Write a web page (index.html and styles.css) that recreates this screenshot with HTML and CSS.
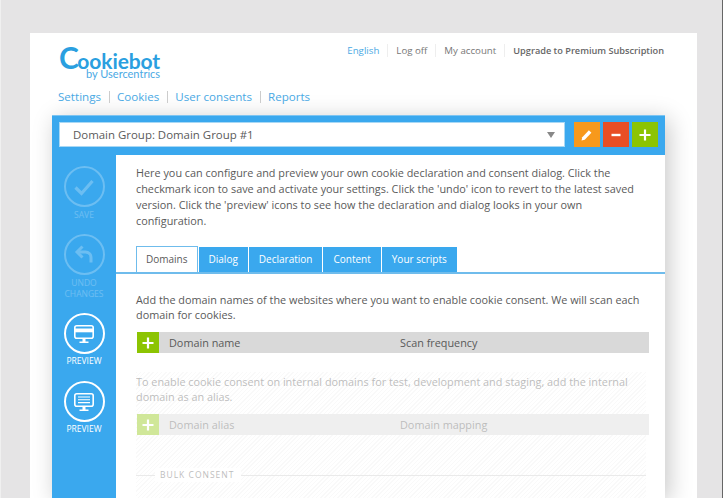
FILE: index.html
```html
<!DOCTYPE html>
<html>
<head>
    <title>Cookiebot - Settings</title>
    <link rel="stylesheet" href="styles.css">
</head>
<body>
    <div class="card">
        <div class="header">
            <div class="logo">
                <div class="logo-name"><span class="logo-c">C</span>ookiebot</div>
                <div class="logo-by">by Usercentrics</div>
            </div>
            <div class="top-nav">
                <a class="lang">English</a>
                <a>Log off</a>
                <a>My account</a>
                <a class="upgrade">Upgrade to Premium Subscription</a>
            </div>
        </div>

        <div class="main-nav">
            <a>Settings</a>
            <a>Cookies</a>
            <a>User consents</a>
            <a>Reports</a>
        </div>

        <div class="panel">
            <div class="panel-top">
                <div class="select">
                    <span>Domain Group: Domain Group #1</span>
                    <span class="caret"></span>
                </div>
                <div class="actions">
                    <div class="btn orange">
                        <svg width="14" height="14" viewBox="0 0 14 14"><path d="M1.5 12.5l.8-3.2 6.6-7 2.5 2.4-6.7 7z" fill="#fff"/></svg>
                    </div>
                    <div class="btn red">
                        <svg width="14" height="14" viewBox="0 0 14 14"><path d="M2.5 7h9" stroke="#fff" stroke-width="2.4" fill="none"/></svg>
                    </div>
                    <div class="btn green">
                        <svg width="14" height="14" viewBox="0 0 14 14"><path d="M1.5 7h11M7 1.5v11" stroke="#fff" stroke-width="2.2" fill="none"/></svg>
                    </div>
                </div>
            </div>

            <div class="panel-body">
                <div class="sidebar">
                    <div class="side-item faded">
                        <div class="circle">
                            <svg width="26" height="26" viewBox="0 0 26 26"><path d="M4.5 13.5l6 6L21.5 7" stroke="#fff" stroke-width="3.2" fill="none"/></svg>
                        </div>
                        <div class="side-label">SAVE</div>
                    </div>
                    <div class="side-item faded">
                        <div class="circle">
                            <svg width="26" height="26" viewBox="0 0 26 26"><path d="M7 10h7.5a5.5 5.5 0 0 1 5.500 5.500v5" stroke="#fff" stroke-width="3" fill="none"/><path d="M11.500 4.500L6 10l5.500 5.500" stroke="#fff" stroke-width="3" fill="none"/></svg>
                        </div>
                        <div class="side-label">UNDO CHANGES</div>
                    </div>
                    <div class="side-item preview">
                        <div class="circle">
                            <svg width="26" height="26" viewBox="0 0 26 26">
                                <rect x="3.800" y="4.800" width="18.400" height="12.400" rx="2" stroke="#fff" stroke-width="1.600" fill="none"/>
                                <rect x="4" y="7.500" width="18" height="3.800" fill="#fff"/>
                                <path d="M11.500 18h3v2.500h-3zM8.500 20.500h9V22h-9z" fill="#fff"/>
                            </svg>
                        </div>
                        <div class="side-label">PREVIEW</div>
                    </div>
                    <div class="side-item preview">
                        <div class="circle">
                            <svg width="26" height="26" viewBox="0 0 26 26">
                                <rect x="3.800" y="4.800" width="18.400" height="12.400" rx="2" stroke="#fff" stroke-width="1.600" fill="none"/>
                                <path d="M7 8h12M7 10.800h12M7 13.600h12" stroke="#fff" stroke-width="1.100" fill="none"/>
                                <path d="M11.500 18h3v2.500h-3zM8.500 20.500h9V22h-9z" fill="#fff"/>
                            </svg>
                        </div>
                        <div class="side-label">PREVIEW</div>
                    </div>
                </div>

                <div class="content">
                    <p class="intro">Here you can configure and preview your own cookie declaration and consent dialog. Click the checkmark icon to save and activate your settings. Click the 'undo' icon to revert to the latest saved version. Click the 'preview' icons to see how the declaration and dialog looks in your own configuration.</p>

                    <div class="tabs">
                        <div class="tab active">Domains</div>
                        <div class="tab">Dialog</div>
                        <div class="tab">Declaration</div>
                        <div class="tab">Content</div>
                        <div class="tab">Your scripts</div>
                    </div>

                    <div class="tab-body">
                        <p class="text">Add the domain names of the websites where you want to enable cookie consent. We will scan each domain for cookies.</p>
                        <div class="table-head">
                            <div class="add">
                                <svg width="14" height="14" viewBox="0 0 14 14"><path d="M1.5 7h11M7 1.5v11" stroke="#fff" stroke-width="2.2" fill="none"/></svg>
                            </div>
                            <div class="col-a">Domain name</div>
                            <div>Scan frequency</div>
                        </div>

                        <div class="ghost">
                            <p class="text">To enable cookie consent on internal domains for test, development and staging, add the internal domain as an alias.</p>
                            <div class="table-head">
                                <div class="add">
                                    <svg width="14" height="14" viewBox="0 0 14 14"><path d="M1.5 7h11M7 1.5v11" stroke="#fff" stroke-width="2.2" fill="none"/></svg>
                                </div>
                                <div class="col-a">Domain alias</div>
                                <div>Domain mapping</div>
                            </div>
                            <div class="section-title"><span>BULK CONSENT</span></div>
                        </div>
                    </div>
                </div>
            </div>
        </div>
    </div>
</body>
</html>
```

FILE: styles.css
```css
body {
    margin: 0;
    height: 498px;
    overflow: hidden;
    background-color: #e5e4e5;
    font-family: "Open Sans", "Noto Sans", sans-serif;
    font-size: 10.85px;
    color: #5a5a5a;
    padding: 33px 25px 0 29px;
    box-sizing: border-box;
    border-left: 1px solid #f0f0f0;
    border-right: 1px solid #666;
}

p {
    margin: 0;
}

.card {
    background-color: #fff;
    height: 465px;
    padding: 0 32px 0 22px;
    overflow: hidden;
}

.header {
    display: flex;
    justify-content: space-between;
    padding: 11px 1px 0 7px;
    height: 37px;
}

.logo {
    margin-top: 3px;
}

.logo-name {
    font-family: "Lato", sans-serif;
    font-weight: 700;
    font-size: 21px;
    line-height: 21px;
    height: 21px;
    color: #2a9fe0;
    letter-spacing: -0.1px;
}

.logo-c {
    font-size: 30px;
    line-height: 21px;
    letter-spacing: -1.5px;
}

.logo-by {
    font-family: "Lato", sans-serif;
    font-size: 11px;
    line-height: 12px;
    color: #4aa9e4;
    text-align: right;
}

.top-nav {
    display: flex;
    align-items: flex-start;
    line-height: 13px;
    color: #777;
    font-size: 9.7px;
}

.top-nav a {
    padding: 0 8px;
    border-right: 1px solid #eee;
}

.top-nav a:last-child {
    padding-right: 0;
    border-right: none;
}

.top-nav .lang {
    color: #4aa9e4;
}

.top-nav .upgrade {
    font-weight: 600;
    font-size: 9.2px;
    color: #666;
}

.main-nav {
    display: flex;
    align-items: center;
    padding: 0 0 0 6px;
    height: 32px;
    font-size: 11.6px;
    color: #4aa9e4;
}

.main-nav a {
    padding-right: 8px;
    margin-right: 7px;
    border-right: 1px solid #ccc;
    line-height: 12px;
}

.main-nav a:last-child {
    border-right: none;
}

.panel {
    background-color: #3aa8ee;
    margin-top: 2px;
    box-shadow: 4px 4px 22px rgba(0, 0, 0, 0.22);
    height: 383px;
}

.panel-top {
    display: flex;
    justify-content: space-between;
    padding: 7px 7px 8px 7px;
    height: 40px;
    box-sizing: border-box;
    border-top: 1px solid #7cc4f2;
}

.select {
    width: 506px;
    margin-top: -1px;
    background-color: #fff;
    display: flex;
    justify-content: space-between;
    align-items: center;
    padding: 0 9px 0 13px;
    box-sizing: border-box;
    font-size: 11.45px;
    border: 1px solid #a8d8f5;
}

.caret {
    border-left: 4px solid transparent;
    border-right: 4px solid transparent;
    border-top: 6px solid #888;
}

.actions {
    display: flex;
    gap: 3px;
    margin-top: -1px;
}

.btn {
    width: 26px;
    height: 25px;
    display: flex;
    align-items: center;
    justify-content: center;
}

.orange {
    background-color: #f7991c;
}

.red {
    background-color: #e84e25;
}

.green {
    background-color: #8cc402;
}

.panel-body {
    display: flex;
    height: 343px;
}

.sidebar {
    width: 64px;
    padding-top: 11px;
    box-sizing: border-box;
}

.side-item {
    display: flex;
    flex-direction: column;
    align-items: center;
    height: 68px;
}

.side-item.faded {
    opacity: 0.25;
}

.side-item.faded + .side-item.preview {
    margin-top: 11px;
}

.circle {
    width: 37px;
    height: 37px;
    border: 2px solid #fff;
    border-radius: 50%;
    display: flex;
    align-items: center;
    justify-content: center;
}

.side-label {
    margin-top: 2px;
    font-size: 8.5px;
    line-height: 11px;
    color: #fff;
    text-align: center;
    width: 50px;
}

.preview .side-label {
    margin-top: 1px;
}

.content {
    flex: 1;
    background-color: #fff;
}

.intro {
    padding: 10px 20px 0 20px;
    line-height: 16px;
    height: 81px;
}

.tabs {
    display: flex;
    gap: 1px;
    height: 26px;
    padding-left: 20px;
    border-bottom: 2px solid #6fbcec;
}

.tab {
    background-color: #3aa8ee;
    color: #fff;
    font-size: 10px;
    padding: 0 10px;
    margin-top: 1px;
    line-height: 24px;
}

.tab.active {
    background-color: #fff;
    color: #5a5a5a;
    margin-top: 0;
    padding: 0 9px;
    border: 1px solid #6fbcec;
    border-bottom: none;
}

.tab-body {
    padding: 18px 16px 0 20px;
}

.text {
    line-height: 15px;
}

.table-head {
    display: flex;
    align-items: center;
    height: 21px;
    margin: 10px 0 0 1px;
    background-color: #d9d9d9;
}

.add {
    width: 22px;
    height: 21px;
    background-color: #8cc402;
    display: flex;
    align-items: center;
    justify-content: center;
}

.col-a {
    width: 231px;
    margin-left: 10px;
}

.ghost {
    margin-top: 19px;
    margin-right: 3px;
    padding-top: 2px;
    height: 130px;
    opacity: 0.4;
    background: repeating-linear-gradient(135deg, #f2f2f2 0, #f2f2f2 1px, #fff 1px, #fff 3px);
}

.ghost .table-head {
    margin-right: -3px;
}

.section-title {
    display: flex;
    align-items: center;
    margin-top: 33px;
    font-size: 8.5px;
    letter-spacing: 1px;
    line-height: 14px;
}

.section-title::before,
.section-title::after {
    content: "";
    height: 1px;
    background-color: #ccc;
}

.section-title::before {
    width: 19px;
}

.section-title::after {
    flex: 1;
}

.section-title span {
    background-color: #fff;
    padding: 0 7px 0 5px;
}
```
